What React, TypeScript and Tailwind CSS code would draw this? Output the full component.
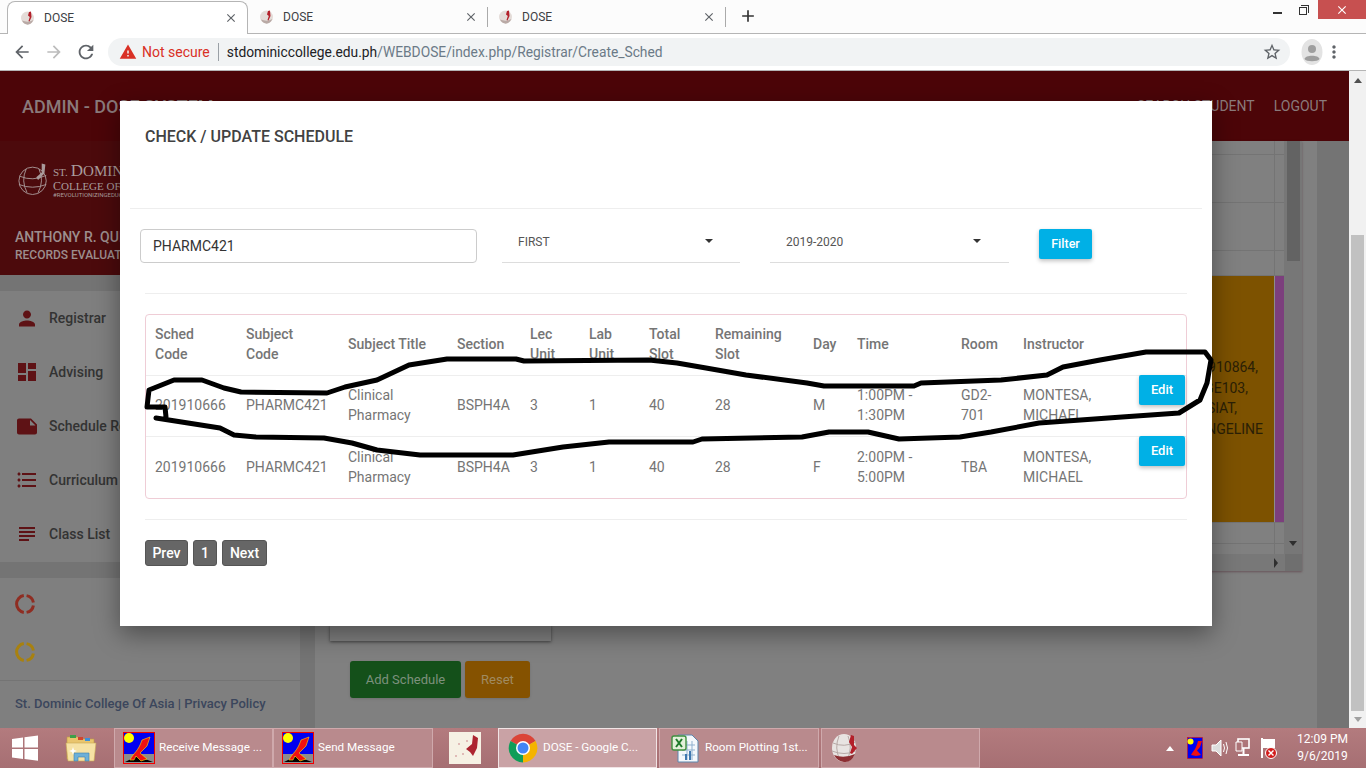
import { MdPerson, MdDashboard, MdNote, MdFormatListBulleted, MdSubject, MdStarBorder, MdMoreVert, MdArrowBack, MdArrowForward, MdRefresh, MdClose, MdAdd, MdWarning } from "react-icons/md";

const ROBOTO = "font-['Roboto',sans-serif]";

const columns = "grid-cols-[91px_102px_109px_73px_59px_60px_66px_98px_44px_104px_62px_125px_47px]";

const headers = ["Sched Code", "Subject Code", "Subject Title", "Section", "Lec Unit", "Lab Unit", "Total Slot", "Remaining Slot", "Day", "Time", "Room", "Instructor"];

const rows = [
  ["201910666", "PHARMC421", "Clinical Pharmacy", "BSPH4A", "3", "1", "40", "28", "M", "1:00PM - 1:30PM", "GD2-701", "MONTESA, MICHAEL"],
  ["201910666", "PHARMC421", "Clinical Pharmacy", "BSPH4A", "3", "1", "40", "28", "F", "2:00PM - 5:00PM", "TBA", "MONTESA, MICHAEL"],
];

const scribble =
  "M166 417 L165 407 L147 407 L149 390 L174 380 L202 380 L224 388 L241 392 L327 393 L345 387 L377 380 L409 365 L447 359 L516 359 L524 361 L649 360 L677 363 L706 368 L746 375 L807 383 L824 386 L914 386 L921 383 L1001 380 L1047 375 L1063 367 L1100 360 L1146 352 L1205 352 L1211 360 L1207 383 L1200 400 L1179 413 L1122 417 L1039 423 L991 432 L960 437 L899 439 L868 432 L829 432 L802 437 L702 439 L693 442 L609 442 L563 447 L513 455 L420 455 L377 450 L352 443 L324 438 L256 437 L234 435 L220 428 L188 423 L156 418";

function Favicon() {
  return (
    <svg width="16" height="16" viewBox="0 0 16 16" className="shrink-0">
      <circle cx="7.5" cy="8" r="6.5" fill="#e4dcd8" />
      <path d="M2 10.5 Q8 13 13.5 10 Q11 15 7 14.6 Q3.5 14 2 10.5Z" fill="#b9aaa6" />
      <path d="M9 2 L11 1.5 L11.5 7 L9.5 11.5 L8.5 11 L9.8 7 L8 5.5Z" fill="#b3202a" />
    </svg>
  );
}

function Tab({ active, width }: { active?: boolean; width: string }) {
  return (
    <div className={`flex items-center h-[33px] pr-[9px] text-[12px] text-[#3c4043] ${width} ${active ? "bg-white rounded-t-[8px] border border-b-0 border-[#b5b5b5] -mb-px" : ""}`}>
      <Favicon />
      <span className="ml-[8px]">DOSE</span>
      <MdClose className="ml-auto text-[#5f6368]" size={14} />
    </div>
  );
}

function AppIcon() {
  return (
    <svg width="32" height="32" viewBox="0 0 32 32" className="shrink-0 -ml-px">
      <rect x="0.5" y="0.5" width="31" height="31" fill="#0000f0" stroke="#f00000" />
      <rect x="1" y="22" width="30" height="9" fill="#8c8c8c" />
      <circle cx="6" cy="6" r="5" fill="#ffff00" />
      <path d="M2 30 L14 24 L30 30Z" fill="#000" />
      <path d="M7 28 C11 20 15 20 19 8 L27 5 L24 14 L17 21 L24 27 L18 29 L13 24 L11 28Z" fill="#f01010" stroke="#ffe000" strokeWidth="0.6" />
    </svg>
  );
}

function TaskButton({ width, icon, label, active }: { width: string; icon: React.ReactNode; label?: string; active?: boolean }) {
  return (
    <div className={`flex items-center h-[40px] pl-[9px] gap-[4px] border text-[11.7px] text-white ${width} ${active ? "bg-[#c9a2a5] border-[#f1e4e5]" : "bg-[#b98a8d] border-[#cfa9ac]"}`}>
      {icon}
      {label && <span className="whitespace-nowrap">{label}</span>}
    </div>
  );
}

function ChromeIcon() {
  return (
    <svg width="31" height="30" viewBox="0 0 31 30" className="shrink-0">
      <path d="M15 15 L2.5 8 A14.5 14.5 0 0 1 27.6 8Z" fill="#db4437" />
      <path d="M15 15 L27.6 8 A14.5 14.5 0 0 1 15 29.5Z" fill="#f4b400" />
      <path d="M15 15 L15 29.5 A14.5 14.5 0 0 1 2.5 8Z" fill="#0f9d58" />
      <circle cx="15" cy="15" r="7" fill="#fff" />
      <circle cx="15" cy="15" r="5.5" fill="#4285f4" />
    </svg>
  );
}

function ExcelIcon() {
  return (
    <svg width="32" height="32" viewBox="0 0 32 32" className="shrink-0">
      <path d="M9 3 H23 L29 9 V30 H9Z" fill="#f4f8fc" stroke="#5d86ad" />
      <path d="M13 13 H26 M13 18 H26 M13 23 H26 M18 9 V28 M23 9 V28" stroke="#8fb0cf" fill="none" />
      <rect x="16" y="22" width="2" height="6" fill="#3f78b0" />
      <rect x="20" y="19" width="2" height="9" fill="#3f78b0" />
      <rect x="3" y="4" width="14" height="14" rx="2" fill="#e3f0da" stroke="#3f8f3f" strokeWidth="1.4" />
      <path d="M7 7 L13 15 M13 7 L7 15" stroke="#1f7a2a" strokeWidth="2" />
    </svg>
  );
}

function GlobeIcon() {
  return (
    <svg width="30" height="30" viewBox="0 0 30 30" className="shrink-0">
      <ellipse cx="13" cy="15" rx="12" ry="14" fill="#e8e4e2" />
      <path d="M2 10 Q13 15 25 9 M1 18 Q13 23 25 18 M8 3 Q3 15 9 27 M17 3 Q22 15 16 27" stroke="#b7a9a6" fill="none" />
      <path d="M3 22 Q13 26 24 21 Q20 30 13 29 Q6 28 3 22Z" fill="#8d2f33" />
      <path d="M20 2 L23 3 L23 12 L26 15 L21 21 L19 20 L21 14 L18 9Z" fill="#b3202a" />
    </svg>
  );
}

function FolderIcon() {
  return (
    <svg width="32" height="32" viewBox="0 0 32 32">
      <path d="M2 5 H13 L15 7 H29 V27 H2Z" fill="#e9c56d" stroke="#bd9a45" strokeWidth="0.6" />
      <rect x="5" y="3" width="6" height="3" fill="#3d9f49" />
      <rect x="13" y="5" width="5" height="3" fill="#d2452d" />
      <rect x="20" y="6" width="5" height="3" fill="#3d8fd6" />
      <path d="M1 11 H31 L29 29 H3Z" fill="#f6e2a4" stroke="#c9a756" strokeWidth="0.6" />
      <path d="M9 29 V21 H24 V29 H20 V25 H13 V29Z" fill="#6db0d8" stroke="#3d7fae" strokeWidth="0.6" />
      <path d="M7 18 L8 15 L9 18 L12 19 L9 20 L8 23 L7 20 L4 19Z" fill="#fff" />
    </svg>
  );
}

function SideItem({ icon, label }: { icon: React.ReactNode; label: string }) {
  return (
    <div className="flex items-center h-[54px] pl-[15px] gap-[10px] whitespace-nowrap">
      <span className="w-[24px] flex justify-center text-[#5e1215]">{icon}</span>
      <span className="text-[14px] font-medium text-[#333]">{label}</span>
    </div>
  );
}

// spinner ring: solid on the left, gaps at top, right and bottom
function Ring({ color }: { color: string }) {
  return (
    <svg width="20" height="20" viewBox="0 0 20 20" className="ml-[15px]">
      <g fill="none" stroke={color} strokeWidth="3">
        <path d="M8.8 1.6 A8.5 8.5 0 0 0 8.8 18.4" />
        <path d="M11.6 1.6 A8.5 8.5 0 0 1 18.4 8.6" />
        <path d="M18.4 11.4 A8.5 8.5 0 0 1 11.6 18.4" />
      </g>
    </svg>
  );
}

function GridRow({ height }: { height: string }) {
  return (
    <div className={`flex shrink-0 border-b border-[#747474] ${height}`}>
      <div className="flex-1 border-r border-[#747474]" />
      <div className="w-[9px]" />
    </div>
  );
}

export default function App() {
  return (
    <div className={`relative w-[1366px] h-[768px] overflow-hidden flex flex-col bg-white ${ROBOTO}`}>
      {/* browser chrome */}
      <div className="h-[34px] shrink-0 bg-[#fcfcfc] border-b border-[#b5b5b5] flex items-end pl-[7px] relative">
        <Tab active width="w-[241px] pl-[12px]" />
        <Tab width="w-[239px] pl-[11px]" />
        <div className="w-px h-[20px] bg-[#aaa] mb-[6px]" />
        <Tab width="w-[237px] pl-[10px]" />
        <div className="w-px h-[20px] bg-[#aaa] mb-[6px]" />
        <MdAdd className="text-[#333] ml-[12px] mb-[7px]" size={20} />
        <div className="ml-auto flex items-start self-start">
          <span className="w-[9px] h-[2px] bg-[#333] mt-[12px] mr-[17px]" />
          <span className="relative w-[8px] h-[8px] border border-[#333] mt-[7px] mr-[11px]">
            <span className="absolute -top-[3px] left-[1px] w-[8px] h-[8px] border-t border-r border-[#333]" />
          </span>
          <span className="w-[48px] h-[19px] bg-[#c75050] text-white flex items-center justify-center">
            <MdClose size={14} />
          </span>
        </div>
      </div>
      <div className="h-[37px] shrink-0 bg-white border-b border-[#b5b5b5] flex items-center pl-[12px]">
        <MdArrowBack size={20} className="text-[#5f6368] shrink-0" />
        <MdArrowForward size={20} className="text-[#bcbcbc] ml-[12px] shrink-0" />
        <MdRefresh size={22} className="text-[#5f6368] ml-[11px] shrink-0" />
        <div className="ml-[11px] h-[28px] w-[1182px] shrink-0 rounded-full bg-[#f1f3f4] flex items-center pl-[11px] pr-[8px] text-[14px]">
          <MdWarning size={18} className="text-[#d93025]" />
          <span className="ml-[5px] text-[#d93025]">Not secure</span>
          <span className="w-px h-[18px] bg-[#9aa0a6] mx-[8px]" />
          <span className="text-[13.8px] text-[#202124]">stdominiccollege.edu.ph</span>
          <span className="text-[13.8px] text-[#6b7a87]">/WEBDOSE/index.php/Registrar/Create_Sched</span>
          <MdStarBorder size={20} className="ml-auto text-[#5f6368]" />
        </div>
        <svg width="22" height="26" viewBox="0 0 22 26" className="ml-[11px] shrink-0">
          <ellipse cx="11" cy="13" rx="10.5" ry="13" fill="#e3e3e3" />
          <circle cx="11" cy="10" r="4" fill="#9e9e9e" />
          <path d="M3.5 20 C4 15.5 18 15.5 18.5 20 C17 23 5 23 3.5 20Z" fill="#9e9e9e" />
        </svg>
        <MdMoreVert size={20} className="ml-[1px] text-[#5f6368] shrink-0" />
      </div>

      {/* dimmed page behind the modal */}
      <div className="relative flex-1 flex min-h-0">
        <div className="w-[1349px] flex flex-col bg-[#747474]">
          <div className="h-[70px] shrink-0 bg-[#4c0508] flex items-center justify-between pl-[22px] pr-[22px] text-[#8a7a7b]">
            <span className="text-[18px] font-medium">ADMIN - DOSE SYSTEM</span>
            <span className="flex gap-[19px] text-[14px]">
              <span>SEARCH STUDENT</span>
              <span>LOGOUT</span>
            </span>
          </div>
          <div className="flex-1 flex min-h-0">
            <div className="w-[300px] shrink-0 flex flex-col bg-[#7f7f7f]">
              <div className="h-[134px] shrink-0 bg-[#4c0a0c] pl-[18px] pt-[19px]">
                <div className="flex items-start gap-[4px] h-[38px] text-[#a99c9c]">
                  <svg width="31" height="38" viewBox="0 0 34 38" className="shrink-0">
                    <circle cx="16" cy="21" r="15" fill="none" stroke="#a99a9a" />
                    <path d="M2 16 Q16 22 31 15 M1 25 Q16 31 31 25 M9 8 Q3 21 10 34 M23 8 Q29 21 22 34" fill="none" stroke="#a99a9a" />
                    <path d="M26 2 L30 3 L29 13 L22 20 L20 17 L26 12Z" fill="#a99a9a" />
                  </svg>
                  <div className="font-['Liberation_Serif',serif] whitespace-nowrap pt-[2px]">
                    <div className="h-[17px] leading-[17px]">
                      <span className="text-[11px] mr-[3px]">ST.</span>
                      <span className="text-[17px]">D</span>
                      <span className="text-[15px]">OMINIC</span>
                    </div>
                    <div className="h-[12px] leading-[12px]">
                      <span className="text-[12px]">C</span>
                      <span className="text-[11px]">OLLEGE OF ASIA</span>
                    </div>
                    <div className="h-[7px] leading-[7px] text-[6px] font-['Roboto',sans-serif]">#REVOLUTIONIZINGEDUCATION</div>
                  </div>
                </div>
                <div className="mt-[30px] -ml-[3px] font-medium text-[#9d8e8e] whitespace-nowrap">
                  <div className="text-[14px] leading-[18px]">ANTHONY R. QUIJANO</div>
                  <div className="text-[12px] leading-[18px]">RECORDS EVALUATOR</div>
                </div>
              </div>
              <div className="h-[16px] shrink-0 bg-[#747474]" />
              <div>
                <SideItem icon={<MdPerson size={27} />} label="Registrar" />
                <SideItem icon={<MdDashboard size={24} />} label="Advising" />
                <SideItem icon={<MdNote size={25} />} label="Schedule Request" />
                <SideItem icon={<MdFormatListBulleted size={24} />} label="Curriculum" />
                <SideItem icon={<MdSubject size={24} />} label="Class List" />
              </div>
              <div className="h-[16px] mt-[1px] shrink-0 bg-[#747474]" />
              <div className="flex items-center h-[48px] mt-[2px]"><Ring color="#8f2d22" /></div>
              <div className="flex items-center h-[48px]"><Ring color="#a8810f" /></div>
              <div className="mt-[4px] border-t border-[#747474] pt-[13px] pl-[15px] text-[13px] font-medium text-[#3b465c] whitespace-nowrap">
                St. Dominic College Of Asia | Privacy Policy
              </div>
            </div>
            <div className="w-[15px] shrink-0" />
            <div className="w-[1002px] shrink-0 bg-[#808080] relative">
              {/* schedule grid, mostly under the modal */}
              <div className="ml-[15px] w-[972px] h-[430px] shadow-[0_1px_2px_rgba(80,40,50,0.5)] flex flex-col">
                <div className="flex h-[413px]">
                  <div className="flex-1 flex flex-col min-w-0">
                    <GridRow height="h-[14px]" />
                    <GridRow height="h-[48px]" />
                    <GridRow height="h-[48px]" />
                    <GridRow height="h-[25px]" />
                    <div className="flex h-[247px] shrink-0 border-b border-[#747474]">
                      <div className="flex-1 bg-[#7d5200] text-[14px] leading-[20.5px] text-[#2b2006] pt-[81px] text-right whitespace-nowrap overflow-hidden">
                        <div className="pr-[16px]">201910864,</div>
                        <div className="pr-[26px]">GE103,</div>
                        <div className="pr-[37px]">SIAT,</div>
                        <div className="pr-[11px]">ANGELINE</div>
                      </div>
                      <div className="w-px bg-[#8c8c8c]" />
                      <div className="w-[9px] bg-[#7c3f7d]" />
                    </div>
                    <GridRow height="h-[21px]" />
                    <div className="h-[10px] flex"><div className="flex-1 border-r border-[#747474]" /><div className="w-[9px]" /></div>
                  </div>
                  <div className="w-[18px] shrink-0 bg-[#777777] relative pl-[3px]">
                    <div className="w-[13px] h-[120px] bg-[#636363]" />
                    <span className="absolute bottom-[8px] left-[5px] w-0 h-0 border-x-[4px] border-x-transparent border-t-[5px] border-t-[#2e2e2e]" />
                  </div>
                </div>
                <div className="h-[17px] bg-[#787878] flex justify-end items-center">
                  <span className="w-0 h-0 border-y-[5px] border-y-transparent border-l-[4px] border-l-[#2e2e2e] mr-[6px]" />
                  <div className="w-[17px] h-[17px] bg-[#6f6f6f] ml-[1px] mr-0" />
                </div>
              </div>
              <div className="absolute left-[15px] top-[484px] w-[221px] h-[16px] bg-[#808080] shadow-[0_1px_3px_rgba(0,0,0,0.5)]" />
              <div className="absolute left-[35px] top-[520px] flex gap-[4px] text-[13px]">
                <button className="w-[111px] h-[37px] rounded-[3px] bg-[#14501a] text-[#7d907d] shadow">Add Schedule</button>
                <button className="w-[65px] h-[37px] rounded-[3px] bg-[#855200] text-[#a08b60] shadow">Reset</button>
              </div>
            </div>
          </div>
        </div>
        <div className="w-[17px] bg-[#f1f1f1] relative flex flex-col items-center">
          <span className="mt-[7px] w-0 h-0 border-x-[4px] border-x-transparent border-b-[5px] border-b-[#505050]" />
          <div className="absolute top-[164px] bottom-[17px] left-[2px] right-[2px] bg-[#c1c1c1]" />
          <span className="absolute bottom-[6px] w-0 h-0 border-x-[4px] border-x-transparent border-t-[5px] border-t-[#a0a0a0]" />
        </div>

        {/* modal */}
        <div className="absolute left-[120px] top-[30px] w-[1092px] h-[525px] bg-white shadow-[0_8px_24px_rgba(0,0,0,0.4)] flex flex-col text-[14px] text-[#757575]">
          <div className="h-[108px] shrink-0 mx-[10px] border-b border-[#eee] pl-[15px] pt-[26px] text-[16px] leading-[20px] font-medium text-[#424242]">
            CHECK / UPDATE SCHEDULE
          </div>
          <div className="mx-[25px] h-[85px] shrink-0 border-b border-[#eee]">
            <div className="flex pt-[20px] -ml-[5px]">
              <div className="w-[337px] h-[34px] border border-[#ccc] rounded-[4px] flex items-center pl-[12px] text-[14px] text-[#333]">PHARMC421</div>
              <div className="ml-[25px] w-[238px] h-[34px] border-b border-[#ddd] flex items-start pt-[4px] pl-[16px] pr-[27px] text-[12px] text-[#555]">
                FIRST
                <span className="ml-auto mt-[6px] w-0 h-0 border-x-[4px] border-x-transparent border-t-[4px] border-t-[#333]" />
              </div>
              <div className="ml-[30px] w-[239px] h-[34px] border-b border-[#ddd] flex items-start pt-[4px] pl-[16px] pr-[28px] text-[12px] text-[#555]">
                2019-2020
                <span className="ml-auto mt-[6px] w-0 h-0 border-x-[4px] border-x-transparent border-t-[4px] border-t-[#333]" />
              </div>
              <button className="ml-[30px] w-[53px] h-[30px] rounded-[2px] bg-[#00b0e6] text-white text-[12.5px] font-medium shadow-[0_2px_4px_rgba(0,0,0,0.25)]">Filter</button>
            </div>
          </div>
          <div className="mx-[25px] mt-[20px] h-[185px] shrink-0 border border-[#efcdd6] rounded-[4px]">
            <div className={`grid ${columns} h-[61px] pb-[2px] items-center border-b border-[#eee] font-medium leading-[20px]`}>
              {headers.map((h) => (
                <div key={h} className="pl-[9px] pr-[15px]">{h}</div>
              ))}
            </div>
            {rows.map((row, i) => (
              <div key={i} className={`grid ${columns} h-[61px] pb-[2px] items-center leading-[20px] ${i === 0 ? "border-b border-[#eee]" : ""}`}>
                {row.map((c, j) => (
                  <div key={j} className="pl-[9px] pr-[8px]">{c}</div>
                ))}
                <button className="self-start -mt-px w-[46px] h-[30px] rounded-[2px] bg-[#00b0e6] text-white text-[13px] font-medium shadow-[0_2px_4px_rgba(0,0,0,0.25)]">Edit</button>
              </div>
            ))}
          </div>
          <div className="mx-[25px] mt-[20px] border-t border-[#eee] pt-[20px] flex gap-[5px]">
            <button className="w-[43px] h-[26px] rounded-[3px] bg-[#666] border border-[#555] text-white text-[14px] font-medium">Prev</button>
            <button className="w-[24px] h-[26px] rounded-[3px] bg-[#666] border border-[#555] text-white text-[14px] font-medium">1</button>
            <button className="w-[45px] h-[26px] rounded-[3px] bg-[#666] border border-[#555] text-white text-[14px] font-medium">Next</button>
          </div>
        </div>
      </div>

      {/* pen scribble drawn over the screenshot */}
      <svg className="absolute inset-0 pointer-events-none" width="1366" height="768" viewBox="0 0 1366 768">
        <path d={scribble} fill="none" stroke="#000" strokeWidth="5" strokeLinejoin="round" strokeLinecap="round" />
      </svg>

      {/* windows taskbar */}
      <div className="h-[40px] shrink-0 bg-linear-to-b from-[#b37b7e] to-[#a66f73] flex items-center text-white">
        <svg width="26" height="26" viewBox="0 0 26 26" className="ml-[12px]">
          <path d="M0 4 L11 2.5 V12.5 H0Z M12.5 2.3 L26 0.5 V12.5 H12.5Z M0 14 H11 V24 L0 22.5Z M12.5 14 H26 V25.8 L12.5 24Z" fill="#fff" />
        </svg>
        <span className="ml-[27px] mr-[17px]"><FolderIcon /></span>
        <TaskButton width="w-[159px]" icon={<AppIcon />} label="Receive Message ..." />
        <TaskButton width="w-[160px]" icon={<AppIcon />} label="Send Message" />
        <div className="w-[16px]" />
        <svg width="32" height="32" viewBox="0 0 32 32" className="shrink-0 mr-[17px]">
          <rect width="32" height="32" fill="#f6f1e4" />
          <path d="M24 3 L29 6 L28 16 L24 24 L21 20 L17 17 L23 12Z" fill="#ad2530" />
          <circle cx="10" cy="12" r="1" fill="#d9a9a9" /><circle cx="14" cy="22" r="1" fill="#d9a9a9" /><circle cx="7" cy="24" r="1" fill="#d9a9a9" /><circle cx="18" cy="9" r="1" fill="#d9a9a9" />
        </svg>
        <TaskButton active width="w-[159px]" icon={<ChromeIcon />} label="DOSE - Google C..." />
        <div className="w-[2px]" />
        <TaskButton width="w-[160px]" icon={<ExcelIcon />} label="Room Plotting 1st..." />
        <div className="w-[2px]" />
        <TaskButton width="w-[159px]" icon={<GlobeIcon />} />
        <div className="ml-auto flex items-center pr-[18px]">
          <span className="w-0 h-0 border-x-[4px] border-x-transparent border-b-[5px] border-b-white mr-[13px]" />
          <svg width="16" height="22" viewBox="0 0 32 44" className="mr-[8px]">
            <rect x="1" y="1" width="30" height="42" fill="#0000f0" stroke="#f00000" />
            <circle cx="7" cy="9" r="6" fill="#ffff00" />
            <path d="M8 36 C14 26 18 24 22 8 L30 8 L26 20 L20 27 L28 36 L18 38Z" fill="#f01010" />
          </svg>
          <svg width="18" height="20" viewBox="0 0 18 20" className="mr-[6px]">
            <path d="M1 7 H5 L10 2 V18 L5 13 H1Z" fill="#ddd" stroke="#fff" />
            <path d="M12.5 6 Q14.5 10 12.5 14 M15 4 Q18 10 15 16" fill="none" stroke="#fff" />
          </svg>
          <svg width="18" height="22" viewBox="0 0 18 22" className="mr-[7px]">
            <rect x="3" y="2" width="11" height="9" fill="none" stroke="#fff" strokeWidth="1.6" />
            <path d="M8.5 11 V17 M3 18 H14" stroke="#fff" strokeWidth="2" />
            <path d="M1 5 H7 V14 H1Z" fill="#ad7477" stroke="#fff" />
          </svg>
          <svg width="18" height="24" viewBox="0 0 18 24" className="mr-[19px]">
            <path d="M2 2 V22" stroke="#fff" strokeWidth="2" />
            <path d="M3 3 H15 V12 H3Z" fill="#fff" />
            <circle cx="11" cy="17" r="5.5" fill="#d21c1c" stroke="#fff" />
            <path d="M8.5 14.5 L13.5 19.5 M13.5 14.5 L8.5 19.5" stroke="#fff" strokeWidth="1.4" />
          </svg>
          <div className="text-[12px] leading-[17px] text-center whitespace-nowrap">
            <div>12:09 PM</div>
            <div>9/6/2019</div>
          </div>
        </div>
      </div>
    </div>
  );
}
